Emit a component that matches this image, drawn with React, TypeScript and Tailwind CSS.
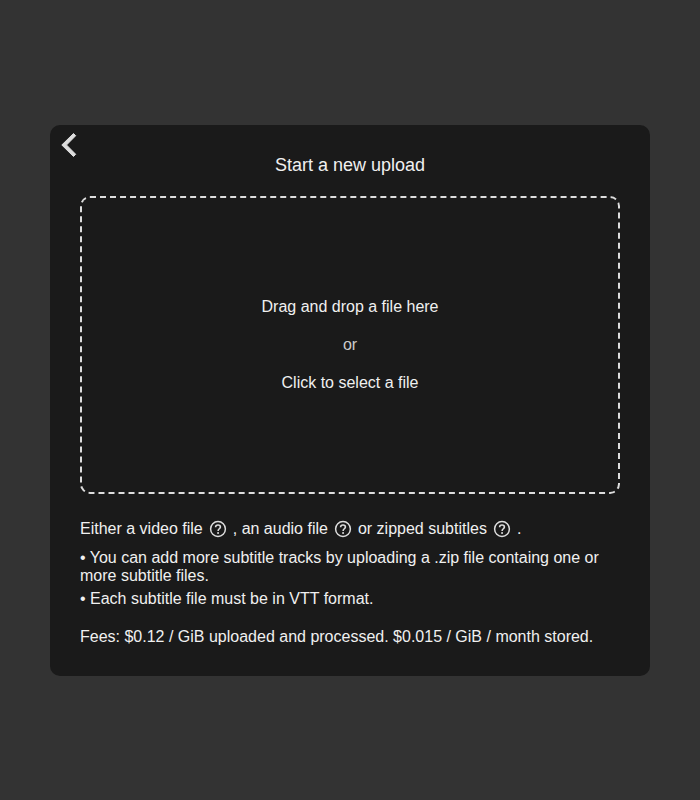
import React from "react";

function Help() {
  return (
    <svg className="mx-1.5 inline-block size-[18px] align-middle" viewBox="0 0 18 18" fill="none" stroke="#dddddd">
      <circle cx="9" cy="9" r="7.4" strokeWidth="1.5" />
      <path d="M6.600 7.200C6.600 5.900 7.600 5.050 9 5.050s2.400.8 2.400 2.050C11.400 8.700 9.100 8.900 9.100 10.900" strokeWidth="1.600" />
      <circle cx="9.050" cy="12.900" r="1" fill="#dddddd" stroke="none" />
    </svg>
  );
}

export default function App() {
  return (
    <div className="flex h-[800px] items-center justify-center bg-[#333333] font-['Liberation_Sans',Arial,sans-serif] text-base leading-[18px] text-[#f0f0f0]">
      <main className="relative h-[551px] w-[600px] rounded-[10px] bg-[#1a1a1a] px-[30px] pt-[30px]">
        <button className="absolute left-[10px] top-[7px]" aria-label="Back">
          <svg width="18" height="26" viewBox="0 0 18 26" fill="#dddddd" stroke="#dddddd" strokeWidth="1" strokeLinejoin="round">
            <path d="M13.500 1.500L1.800 13l11.700 11.500 2.200-2.200L6.500 13l9.200-9.300z" />
          </svg>
        </button>
        <h1 className="text-center text-[18px] leading-[21px]">Start a new upload</h1>
        <div className="mt-5 flex h-[298px] flex-col items-center justify-center gap-5 rounded-[10px] border-2 border-dashed border-[#dddddd]">
          <p>Drag and drop a file here</p>
          <p className="text-[#cccccc]">or</p>
          <p>Click to select a file</p>
        </div>
        <p className="mt-[26px] flex h-[18px] items-center whitespace-pre">
          Either a video file<Help />, an audio file<Help />or zipped subtitles<Help />.
        </p>
        <p className="mt-[11px]">• You can add more subtitle tracks by uploading a .zip file containg one or more subtitle files.</p>
        <p className="mt-[5px]">• Each subtitle file must be in VTT format.</p>
        <p className="mt-5">Fees: $0.12 / GiB uploaded and processed. $0.015 / GiB / month stored.</p>
      </main>
    </div>
  );
}
